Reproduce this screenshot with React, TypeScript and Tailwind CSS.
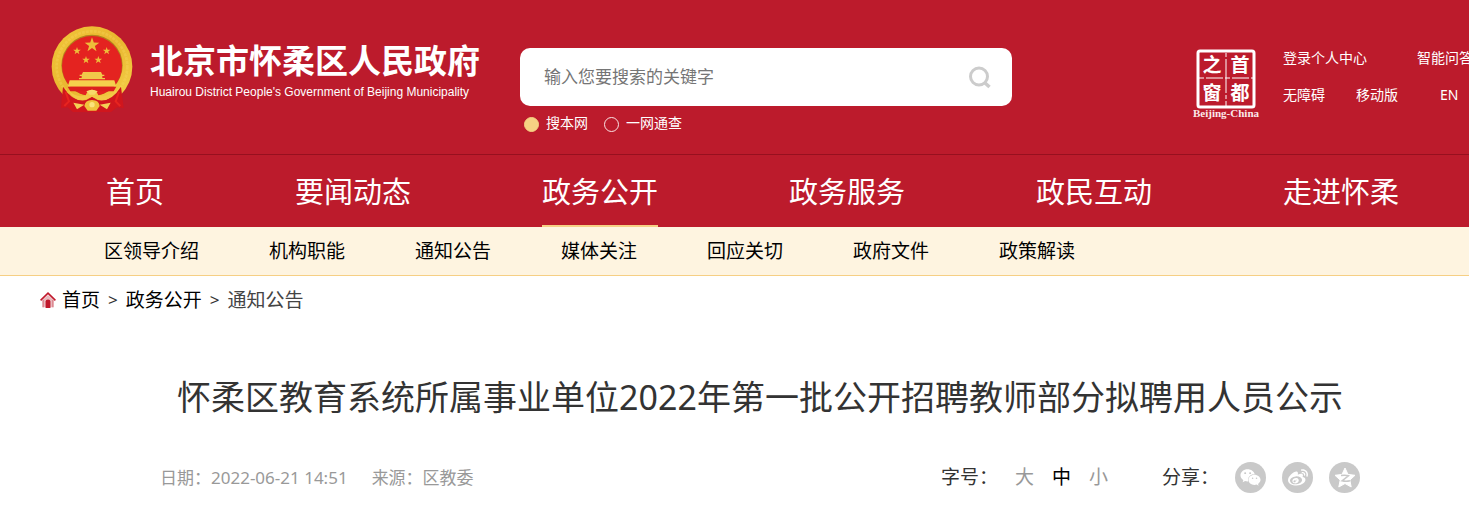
import React, { useState } from 'react';
import { FaWeibo, FaWeixin } from 'react-icons/fa';

const NAV = ['首页', '要闻动态', '政务公开', '政务服务', '政民互动', '走进怀柔'];
const SUB_NAV = ['区领导介绍', '机构职能', '通知公告', '媒体关注', '回应关切', '政府文件', '政策解读'];
const SIZES = ['大', '中', '小'];

const starPoints = (cx: number, cy: number, r: number, inner = 0.4) =>
  Array.from({ length: 10 }, (_, i) => {
    const radius = i % 2 === 0 ? r : r * inner;
    const angle = (Math.PI / 5) * i - Math.PI / 2;
    return `${(cx + radius * Math.cos(angle)).toFixed(1)},${(cy + radius * Math.sin(angle)).toFixed(1)}`;
  }).join(' ');

const Emblem = () => (
  <svg viewBox="34 32 246 258" className="w-[82px] h-[86px] shrink-0" aria-hidden="true">
    <defs>
      <linearGradient id="gold" x1="0" y1="0" x2="1" y2="1">
        <stop offset="0" stopColor="#f2c63a" />
        <stop offset="0.5" stopColor="#e9b62f" />
        <stop offset="1" stopColor="#f6d34c" />
      </linearGradient>
    </defs>
    {/* wheat ring */}
    <circle cx="157" cy="154" r="121" fill="url(#gold)" />
    <circle cx="157" cy="154" r="106" fill="none" stroke="#f9dc62" strokeWidth="8" strokeDasharray="9 3" opacity="0.3" />
    {/* drapes */}
    <path d="M70 214 Q100 262 140 254 L157 244 L174 254 Q214 262 244 214 L252 278 L232 276 L214 290 H100 L84 276 L64 278 Z" fill="#d0161d" />
    <path d="M78 230 L88 258 L74 272 M238 230 L228 258 L242 272" fill="none" stroke="#e8241f" strokeWidth="6" />
    <circle cx="157" cy="150" r="92" fill="#b3831c" />
    <circle cx="157" cy="152" r="90" fill="#e42320" />
    <polygon points={starPoints(157, 89, 23)} fill="#eebd3a" />
    <polygon points={starPoints(112, 107, 12)} fill="#eebd3a" />
    <polygon points={starPoints(201, 107, 12)} fill="#eebd3a" />
    <polygon points={starPoints(139, 134, 12)} fill="#eebd3a" />
    <polygon points={starPoints(176, 134, 12)} fill="#eebd3a" />
    {/* gate tower */}
    <path d="M130 170 H184 L188 178 H194 V182 H188 V188 H196 V192 H118 V188 H126 V182 H120 V178 H126 Z" fill="#f1c84a" />
    <path d="M90 195 H224 L230 214 H84 Z" fill="#f5cf4c" />
    <path d="M84 214 H230 L222 228 H92 Z" fill="#dc1f1e" />
    {/* ribbon and gear */}
    <path d="M86 224 Q112 250 138 240 Q144 224 157 223 Q170 224 176 240 Q202 250 228 224 Q214 256 182 254 L157 244 L132 254 Q100 256 86 224 Z" fill="#f3c945" />
    <path d="M140 228 Q157 218 174 228 L164 238 H150 Z" fill="#f7da6a" />
    <path d="M101 262 L134 268 L112 282 Z M213 262 L180 268 L202 282 Z" fill="#f4cf55" />
    <path d="M134 272 Q136 254 157 254 Q178 254 180 272 L170 286 H144 Z" fill="#f0c23c" />
    <circle cx="157" cy="268" r="8" fill="#fbe27c" />
  </svg>
);

const CapitalWindow = () => (
  <a href="#" aria-label="首都之窗" className="shrink-0">
    <svg viewBox="0 0 70 72" className="w-[70px] h-[72px]">
      <rect x="5" y="3" width="56" height="56" rx="2" fill="none" stroke="#fff" strokeWidth="3" />
      <path d="M33 5 V58" stroke="#fff" strokeWidth="1" strokeDasharray="4 2 34 2" />
      <path d="M6 30 H60" stroke="#fff" strokeWidth="1" strokeDasharray="5 2 17 2" />
      <g fill="#fff" fontFamily="'Noto Sans CJK SC', sans-serif" fontWeight="700" fontSize="19" textAnchor="middle">
        <text x="19" y="24">之</text>
        <text x="47" y="24">首</text>
        <text x="19" y="52">窗</text>
        <text x="47" y="52">都</text>
      </g>
      <text x="33" y="69" fill="#fbe9ea" textAnchor="middle" fontFamily="'Liberation Serif', serif" fontWeight="700" fontSize="11">
        Beijing-China
      </text>
    </svg>
  </a>
);

const HomeIcon = () => (
  <svg viewBox="0 0 16 16" className="w-4 h-4" aria-hidden="true">
    <path d="M3 7.5 V15.3 H13 V7.5 L8 3 Z" fill="#e9b9be" />
    <path d="M0.6 8.3 L8 1.2 L15.4 8.3" fill="none" stroke="#c0182b" strokeWidth="1.6" />
    <path d="M3 8 V15.3 M13 8 V15.3" stroke="#cf5a66" strokeWidth="1" />
    <path d="M5.6 16 V9.5 Q5.6 7.4 8 7.4 Q10.4 7.4 10.4 9.5 V16 Z" fill="#c0182b" />
  </svg>
);

const Header = () => {
  const [scope, setScope] = useState('site');

  return (
    <header className="bg-[#bc1b2c] text-white">
      <div className="w-[1440px] mx-auto h-[154px] flex items-start">
        <a href="#" className="flex items-start pl-[11px] pt-[26px] w-[480px] shrink-0">
          <Emblem />
          <span className="pl-[17px] pt-4 whitespace-nowrap">
            <span className="block text-[33px] leading-[38px] font-bold">北京市怀柔区人民政府</span>
            <span className="block text-[12px] leading-[24px] font-['Liberation_Sans',sans-serif]">
              Huairou District People's Government of Beijing Municipality
            </span>
          </span>
        </a>

        <form className="w-[492px] pt-12 shrink-0" onSubmit={e => e.preventDefault()}>
          <div className="flex items-center h-[58px] bg-white rounded-[10px] pl-6 pr-5">
            <input
              type="text"
              aria-label="搜索"
              placeholder="输入您要搜索的关键字"
              className="flex-1 min-w-0 text-[17px] text-[#333] placeholder:text-[#757575] outline-none"
            />
            <button type="submit" aria-label="搜索" className="text-[#ccc]">
              <svg viewBox="0 0 24 24" className="w-6 h-6" fill="none" stroke="currentColor" strokeWidth="3">
                <circle cx="11" cy="11.5" r="8.5" />
                <path d="M16.5 17.5 L21.5 22" strokeWidth="3.5" />
              </svg>
            </button>
          </div>
          <div className="flex items-center gap-4 pl-1 pt-[7px] text-[14px] leading-5">
            {[['site', '搜本网'], ['all', '一网通查']].map(([value, label]) => (
              <label key={value} className="flex items-center gap-[7px]">
                <input
                  type="radio"
                  name="scope"
                  value={value}
                  checked={scope === value}
                  onChange={() => setScope(value)}
                  className="appearance-none w-[15px] h-[15px] mt-[2px] rounded-full border border-[#fbe3e4] checked:bg-[#f6d283] checked:border-[#f6d283]"
                />
                {label}
              </label>
            ))}
          </div>
        </form>

        <div className="flex ml-auto pt-12">
          <CapitalWindow />
          <div className="pl-5 w-[217px] text-[14px] leading-5 whitespace-nowrap">
            <div className="flex gap-[50px]">
              <a href="#">登录个人中心</a>
              <a href="#">智能问答</a>
            </div>
            <div className="flex pt-[17px]">
              <a href="#" className="mr-[31px]">无障碍</a>
              <a href="#" className="mr-[42px]">移动版</a>
              <a href="#">EN</a>
            </div>
          </div>
        </div>
      </div>

      <nav className="border-t border-[#97101f]">
        <ul className="w-[1440px] mx-auto pl-[66px] flex gap-[131px] text-[29px]">
          {NAV.map(item => (
            <li key={item} className="shrink-0">
              <a
                href="#"
                className={`block h-[72px] leading-[74px] border-b-2 ${item === '政务公开' ? 'border-[#f6cf84]' : 'border-transparent'}`}
              >
                {item}
              </a>
            </li>
          ))}
        </ul>
      </nav>
    </header>
  );
};

const SubNav = () => (
  <nav className="bg-[#fef4e0] border-b border-[#f6cf84]">
    <ul className="w-[1440px] mx-auto pl-16 flex gap-[70px] text-[19px] leading-[48px] text-black">
      {SUB_NAV.map(item => (
        <li key={item}><a href="#">{item}</a></li>
      ))}
    </ul>
  </nav>
);

const Breadcrumb = () => (
  <div className="w-[1440px] mx-auto flex items-center gap-2 text-[19px] leading-[48px] text-black">
    <a href="#" className="flex items-center gap-[6px]">
      <HomeIcon />
      首页
    </a>
    <span className="text-[17px] text-[#333]">&gt;</span>
    <a href="#">政务公开</a>
    <span className="text-[17px] text-[#333]">&gt;</span>
    <a href="#" className="text-[#444]">通知公告</a>
  </div>
);

const Article = () => {
  const [size, setSize] = useState('中');

  return (
    <main className="w-[1200px] mx-auto">
      <h1 className="pt-12 text-[34px] leading-[50px] text-center text-[#333] whitespace-nowrap">
        怀柔区教育系统所属事业单位2022年第一批公开招聘教师部分拟聘用人员公示
      </h1>
      <div className="flex items-center pt-10 pb-4">
        <div className="flex gap-6 text-[17px] text-[#999]">
          <span>日期：2022-06-21 14:51</span>
          <span>来源：区教委</span>
        </div>
        <div className="flex items-center ml-auto text-[19px] text-[#333]">
          <span>字号：</span>
          <div className="flex gap-[18px] pl-[17px] pr-[54px]">
            {SIZES.map(s => (
              <button key={s} onClick={() => setSize(s)} className={s === size ? 'text-black' : 'text-[#999]'}>
                {s}
              </button>
            ))}
          </div>
          <span>分享：</span>
          <div className="flex gap-4 pl-4 text-white">
            <button aria-label="微信" className="w-[31px] h-[31px] rounded-full bg-[#c9c9c9] flex items-center justify-center">
              <FaWeixin size={21} />
            </button>
            <button aria-label="微博" className="w-[31px] h-[31px] rounded-full bg-[#c9c9c9] flex items-center justify-center">
              <FaWeibo size={20} />
            </button>
            <button aria-label="QQ空间" className="w-[31px] h-[31px] rounded-full bg-[#c9c9c9] flex items-center justify-center">
              <svg viewBox="0 0 24 24" className="w-6 h-6">
                <polygon points={starPoints(12, 12.5, 10.5, 0.48)} fill="#fff" stroke="#fff" strokeLinejoin="round" />
                <path d="M8 9.6 Q12 8.8 15.4 9.8 L9 14.8 Q13 15.8 17 14.8" fill="none" stroke="#c9c9c9" strokeWidth="1.5" />
              </svg>
            </button>
          </div>
        </div>
      </div>
    </main>
  );
};

export default function App() {
  return (
    <div className="overflow-x-hidden bg-white font-['Noto_Sans','Noto_Sans_CJK_SC',sans-serif]">
      <div className="min-w-[1520px]">
        <Header />
        <SubNav />
        <Breadcrumb />
        <Article />
      </div>
    </div>
  );
}
